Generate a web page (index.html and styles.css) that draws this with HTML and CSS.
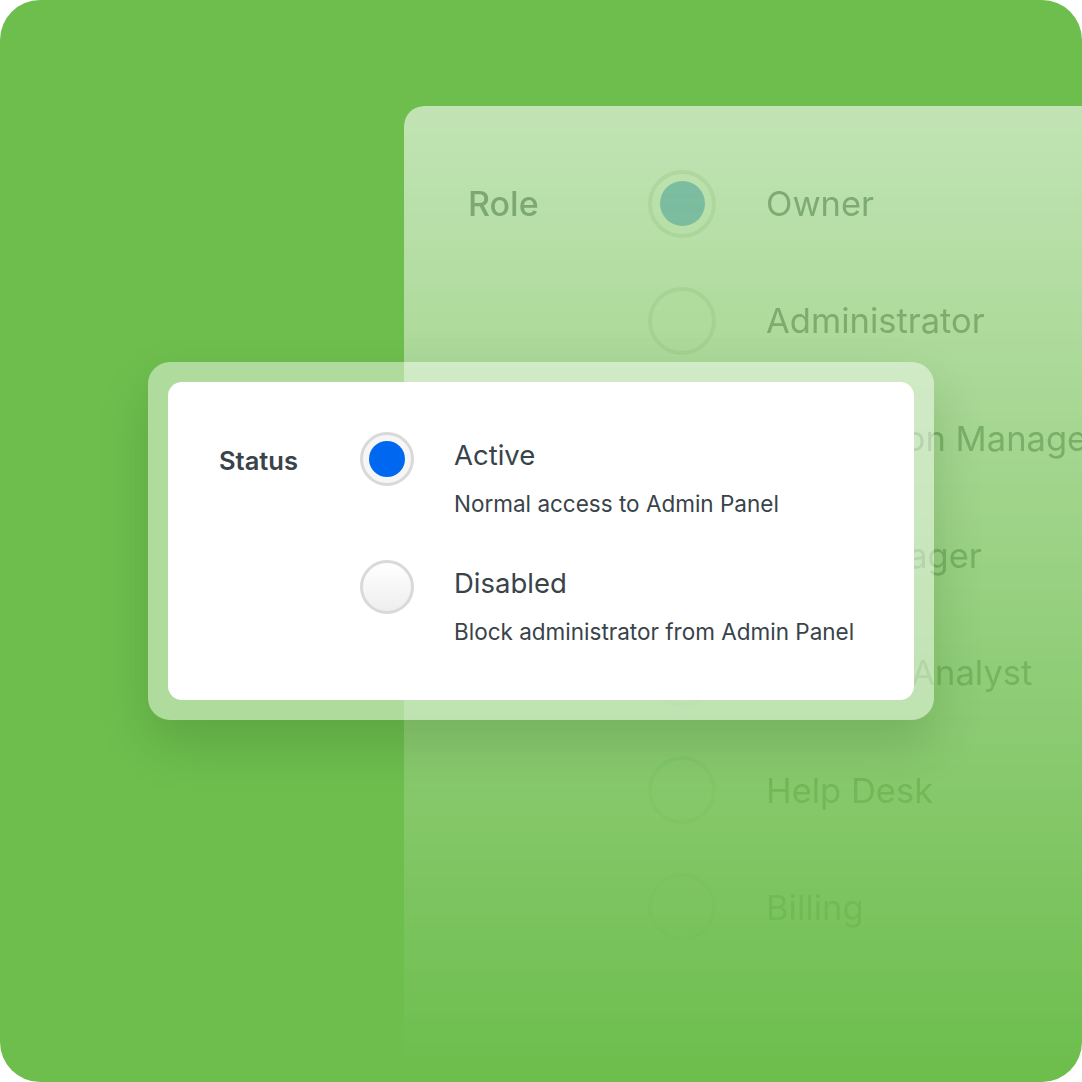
FILE: index.html
```html
<!DOCTYPE html>
<html lang="en">
<head>
<meta charset="utf-8">
<title>Status</title>
<link rel="stylesheet" href="styles.css">
</head>
<body>
<div class="frame">
  <div class="panel">
    <div class="role-row">
      <div class="role-label">Role</div>
      <div class="role-radio selected"><span class="role-dot"></span></div>
      <div class="role-name">Owner</div>
    </div>
    <div class="role-row">
      <div class="role-label"></div>
      <div class="role-radio"></div>
      <div class="role-name">Administrator</div>
    </div>
    <div class="role-row">
      <div class="role-label"></div>
      <div class="role-radio"></div>
      <div class="role-name">Permission Manager</div>
    </div>
    <div class="role-row">
      <div class="role-label"></div>
      <div class="role-radio"></div>
      <div class="role-name">Site Manager</div>
    </div>
    <div class="role-row">
      <div class="role-label"></div>
      <div class="role-radio"></div>
      <div class="role-name">Security Analyst</div>
    </div>
    <div class="role-row">
      <div class="role-label"></div>
      <div class="role-radio"></div>
      <div class="role-name">Help Desk</div>
    </div>
    <div class="role-row">
      <div class="role-label"></div>
      <div class="role-radio"></div>
      <div class="role-name">Billing</div>
    </div>
  </div>

  <div class="card-wrap">
    <div class="card">
      <div class="status-label">Status</div>
      <div class="options">
        <div class="option">
          <div class="radio checked"><span class="dot"></span></div>
          <div class="option-text">
            <div class="option-title">Active</div>
            <div class="option-desc">Normal access to Admin Panel</div>
          </div>
        </div>
        <div class="option">
          <div class="radio"></div>
          <div class="option-text">
            <div class="option-title">Disabled</div>
            <div class="option-desc">Block administrator from Admin Panel</div>
          </div>
        </div>
      </div>
    </div>
  </div>
</div>
</body>
</html>
```

FILE: styles.css
```css
* { box-sizing: border-box; }

html, body {
  margin: 0;
  padding: 0;
  background: #ffffff;
}

body {
  font-family: "Inter", "Liberation Sans", sans-serif;
}

.frame {
  position: relative;
  width: 1082px;
  height: 1082px;
  border-radius: 40px;
  background: #6ebe4e;
  overflow: hidden;
  padding-top: 106px;
  padding-left: 404px;
}

/* Background role panel */
.panel {
  width: 720px;
  height: 960px;
  border-top-left-radius: 20px;
  background: rgba(255, 255, 255, 0.58);
  padding-top: 39px;
  padding-left: 64px;
  -webkit-mask-image: linear-gradient(to bottom, #000 0%, rgba(0,0,0,0.6) 40%, rgba(0,0,0,0.25) 75%, rgba(0,0,0,0) 100%);
  mask-image: linear-gradient(to bottom, #000 0%, rgba(0,0,0,0.6) 40%, rgba(0,0,0,0.25) 75%, rgba(0,0,0,0) 100%);
}

.role-row {
  display: flex;
  align-items: center;
  height: 117.3px;
}

.role-label {
  width: 180px;
  flex: none;
  font-size: 34px;
  font-weight: 500;
  color: #7ea576;
}

.role-radio {
  width: 68px;
  height: 68px;
  flex: none;
  border-radius: 50%;
  border: 4px solid rgba(120, 170, 100, 0.18);
  display: flex;
  align-items: center;
  justify-content: center;
}

.role-dot {
  width: 45px;
  height: 45px;
  border-radius: 50%;
  background: #7dbca8;
}

.role-name {
  margin-left: 50px;
  font-size: 34.5px;
  color: #80a877;
  white-space: nowrap;
}

/* Foreground status card */
.card-wrap {
  position: absolute;
  left: 148px;
  top: 362px;
  width: 786px;
  height: 358px;
  padding: 20px;
  border-radius: 22px;
  background: rgba(255, 255, 255, 0.45);
  box-shadow: 0 24px 50px rgba(20, 60, 10, 0.18);
}

.card {
  height: 100%;
  background: #ffffff;
  border-radius: 14px;
  padding: 50px 0 0 51px;
  display: flex;
  align-items: flex-start;
  color: #39434a;
}

.status-label {
  width: 141px;
  flex: none;
  margin-top: 14px;
  font-size: 25.5px;
  line-height: 30px;
  font-weight: 600;
}

.options {
  display: flex;
  flex-direction: column;
  gap: 44px;
}

.option {
  display: flex;
  align-items: flex-start;
}

.radio {
  width: 54px;
  height: 54px;
  flex: none;
  border-radius: 50%;
  border: 3px solid #d9d9d9;
  background: linear-gradient(to bottom, #ffffff, #eeeeee);
  display: flex;
  align-items: center;
  justify-content: center;
}

.radio.checked {
  background: #f6f6f6;
}

.dot {
  width: 36px;
  height: 36px;
  border-radius: 50%;
  background: #0068f0;
}

.option-text {
  margin-left: 40px;
  padding-top: 8px;
}

.option-title {
  font-size: 27.5px;
  line-height: 30px;
}

.option-desc {
  margin-top: 22px;
  font-size: 22.5px;
  line-height: 24px;
}
```
